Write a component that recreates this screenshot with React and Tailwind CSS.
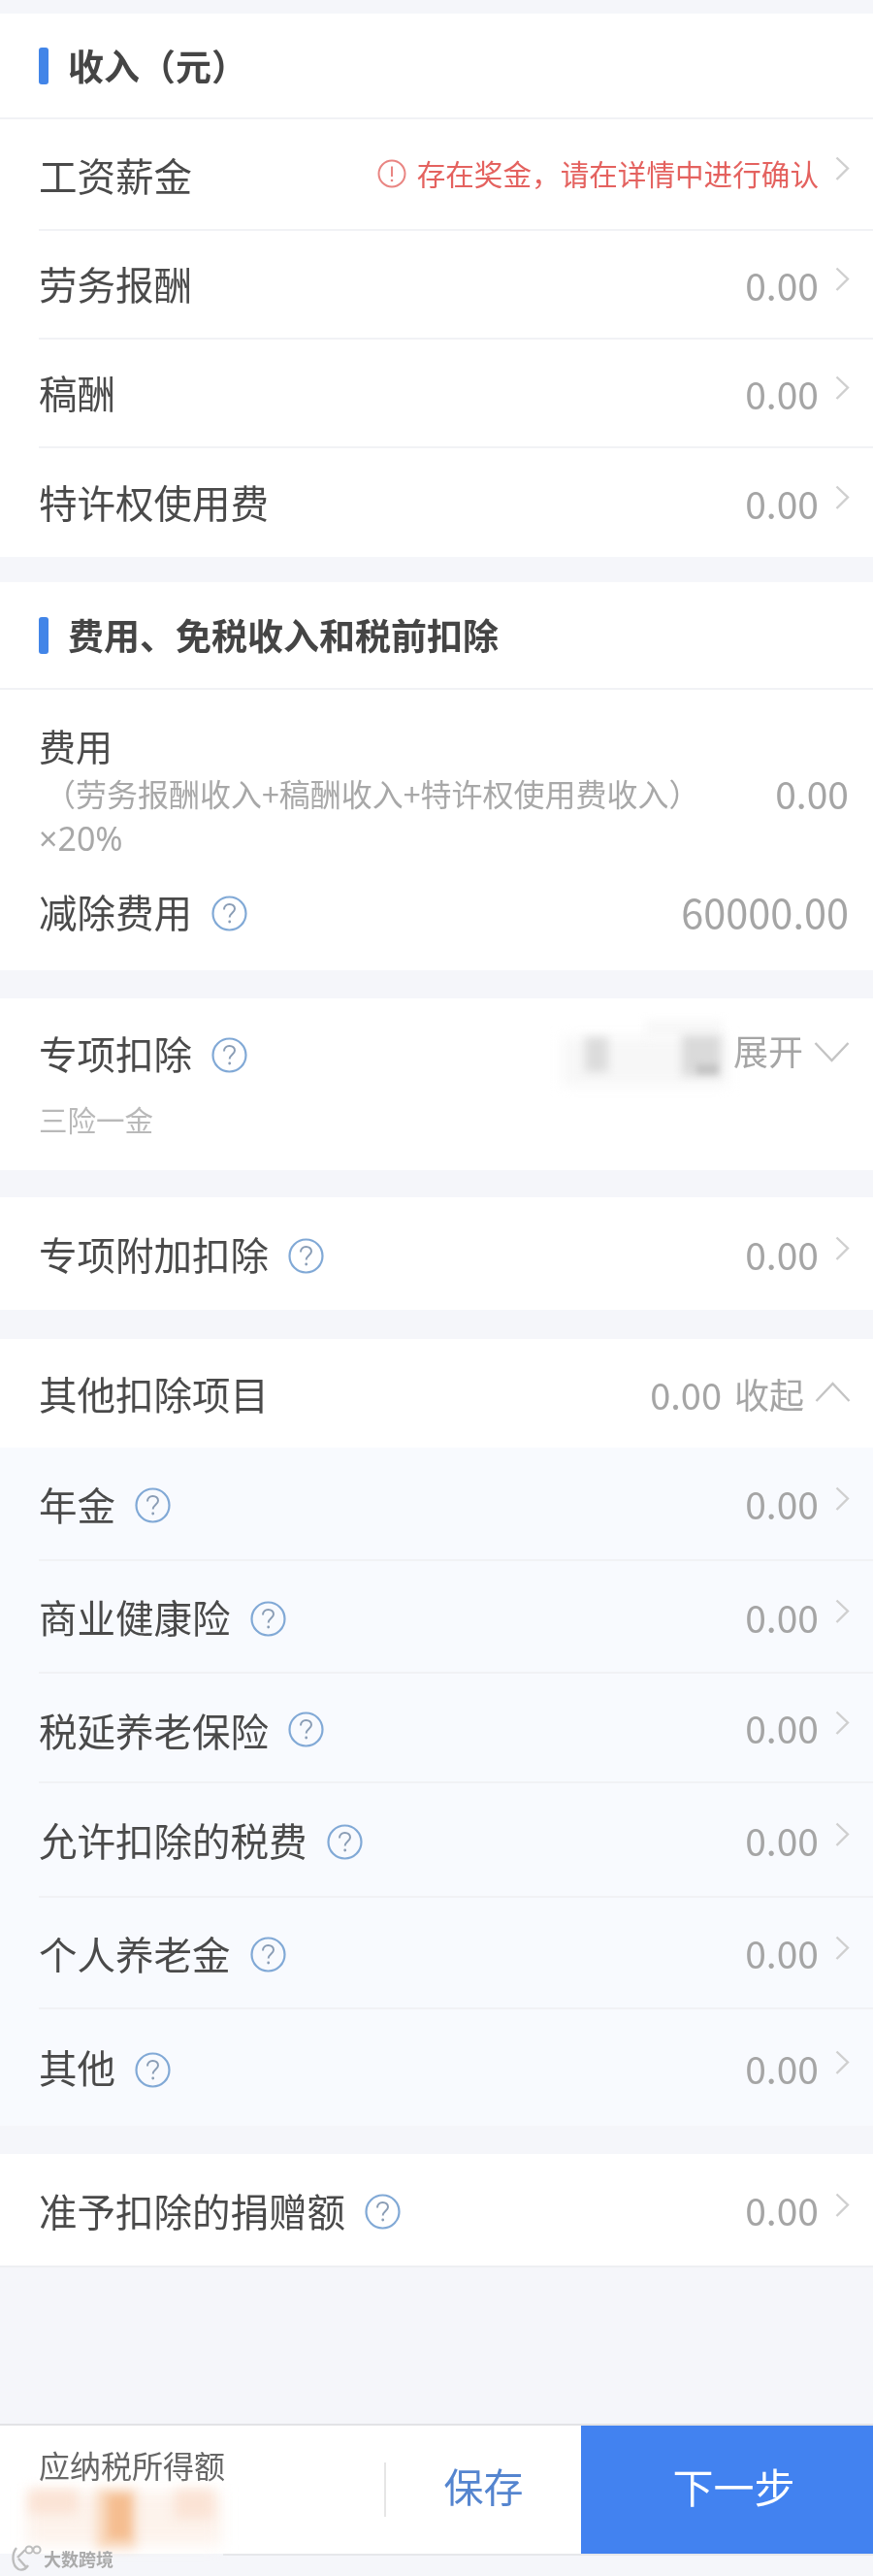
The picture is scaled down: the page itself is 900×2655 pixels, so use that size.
import React from 'react';

const Chevron = () => (
  <svg width="15" height="26" viewBox="0 0 15 26" fill="none" className="mb-[10px] ml-[17px] shrink-0">
    <path d="M1.5 1.5 L13 12.5 L1.5 24" stroke="#cfcfcf" strokeWidth="2.4" />
  </svg>
);

const Help = () => (
  <svg width="37" height="37" viewBox="0 0 37 37" fill="none" className="ml-[20px] mt-[4px] shrink-0">
    <circle cx="18.5" cy="18.5" r="17" stroke="#81a9d6" strokeWidth="2.2" />
    <path d="M13 14.5 C13 11 15.5 9 18.5 9 C21.8 9 24 11 24 13.8 C24 17.5 18.7 18 18.7 22.5" stroke="#8a9db5" strokeWidth="2" />
    <circle cx="18.7" cy="27" r="1.4" fill="#8a9db5" />
  </svg>
);

const Alert = () => (
  <svg width="30" height="30" viewBox="0 0 30 30" fill="none" className="mr-[11px] shrink-0">
    <circle cx="15" cy="15" r="13.5" stroke="#e98582" strokeWidth="2" />
    <path d="M15 7.5 V18" stroke="#e98582" strokeWidth="2" />
    <circle cx="15" cy="22" r="1.3" fill="#e98582" />
  </svg>
);

const Title = ({ text }) => (
  <div className="flex items-center pl-[40px] h-full">
    <div className="w-[10px] h-[38px] rounded-[3px] bg-[#4285e8]"></div>
    <div className="ml-[20px] text-[37px] font-bold text-[#454545]">{text}</div>
  </div>
);

const Row = ({ label, help, value = '0.00', height, last, warn, textClass = '' }) => (
  <div className="pl-[40px]" style={{ height }}>
    <div className={`flex items-center h-full pr-[24px] ${last ? '' : 'border-b-2 border-[#f1f2f5]'}`}>
      <span className={`text-[39.5px] text-[#4a4a4a] whitespace-nowrap ${textClass}`}>{label}</span>
      {help && <Help />}
      <div className="ml-auto flex items-center">
        {warn ? (
          <>
            <Alert />
            <span className="text-[29.6px] text-[#e4625f] whitespace-nowrap">{warn}</span>
          </>
        ) : (
          <span className="text-[39px] text-[#a5a5a5]">{value}</span>
        )}
        <Chevron />
      </div>
    </div>
  </div>
);

const otherRows = [
  ['年金', 117, ''],
  ['商业健康险', 116, ''],
  ['税延养老保险', 113, 'mt-[5px]'],
  ['允许扣除的税费', 118, ''],
  ['个人养老金', 115, ''],
  ['其他', 120, 'mb-[2px]'],
];

export default function App() {
  return (
    <div className="relative w-[900px] h-[2655px] overflow-hidden bg-[#f5f6fa] blur-[0.6px] font-['Noto_Sans_CJK_SC','Noto_Sans',sans-serif]">
      <div className="h-[14px]"></div>

      {/* 收入 */}
      <div className="bg-white">
        <div className="h-[109px] border-b-2 border-[#f1f2f5]">
          <Title text="收入（元）" />
        </div>
        <Row label="工资薪金" height={115} warn="存在奖金，请在详情中进行确认" />
        <Row label="劳务报酬" height={112} textClass="mb-[3px]" />
        <Row label="稿酬" height={112} textClass="mb-[3px]" />
        <Row label="特许权使用费" height={112} last textClass="mb-[3px]" />
      </div>

      <div className="h-[26px]"></div>

      {/* 费用 */}
      <div className="bg-white">
        <div className="h-[111px] border-b-2 border-[#f1f2f5]">
          <Title text="费用、免税收入和税前扣除" />
        </div>
        <div className="h-[289px] pl-[40px] pr-[25px] pt-[28px]">
          <div className="text-[38px] leading-[58px] text-[#4a4a4a]">费用</div>
          <div className="flex items-center h-[40px]">
            <span className="ml-[6px] text-[32px] text-[#a8a8a8] whitespace-nowrap">（劳务报酬收入+稿酬收入+特许权使用费收入）</span>
            <span className="ml-auto text-[39px] text-[#a5a5a5]">0.00</span>
          </div>
          <div className="text-[34px] leading-[54px] text-[#a8a8a8] font-['Noto_Sans',sans-serif]">×20%</div>
          <div className="flex items-center h-[70px] mt-[13px]">
            <span className="text-[39.5px] text-[#4a4a4a]">减除费用</span>
            <Help />
            <span className="ml-auto text-[41.5px] text-[#a5a5a5]">60000.00</span>
          </div>
        </div>
      </div>

      <div className="h-[29px]"></div>

      {/* 专项扣除 */}
      <div className="relative h-[177px] bg-white pl-[40px] pr-[24px] pt-[36px]">
        <div className="flex items-center h-[40px]">
          <span className="text-[39.5px] text-[#4a4a4a]">专项扣除</span>
          <Help />
          <span className="ml-auto mb-[6px] text-[36px] text-[#a5a5a5]">展开</span>
          <svg width="37" height="22" viewBox="0 0 37 22" fill="none" className="ml-[11px] mb-[3px]">
            <path d="M1.5 2 L18.5 20 L35.5 2" stroke="#c4c4c4" strokeWidth="2.4" />
          </svg>
        </div>
        <div className="mt-[26px] text-[29.5px] text-[#b9b9b9]">三险一金</div>
        <div className="absolute left-[580px] top-[40px] w-[170px] h-[50px] bg-[#f7f7f7] blur-[7px]"></div>
        <div className="absolute left-[665px] top-[22px] w-[80px] h-[20px] bg-[#f8f8f8] blur-[5px]"></div>
        <div className="absolute left-[603px] top-[40px] w-[24px] h-[36px] bg-[#dcdcdc] blur-[5px]"></div>
        <div className="absolute left-[703px] top-[38px] w-[40px] h-[42px] bg-[#dadada] blur-[5px]"></div>
        <div className="absolute left-[718px] top-[68px] w-[22px] h-[10px] bg-[#c4c4c4] blur-[3px]"></div>
      </div>

      <div className="h-[28px]"></div>

      <div className="bg-white">
        <Row label="专项附加扣除" help height={116} last />
      </div>

      <div className="h-[30px]"></div>

      {/* 其他扣除项目 */}
      <div className="h-[112px] bg-white flex items-center pl-[40px] pr-[23px]">
        <span className="text-[39.5px] text-[#4a4a4a]">其他扣除项目</span>
        <span className="ml-auto text-[38px] text-[#a5a5a5]">0.00</span>
        <span className="ml-[13px] text-[36px] text-[#a5a5a5]">收起</span>
        <svg width="37" height="22" viewBox="0 0 37 22" fill="none" className="ml-[11px] mb-[2px]">
          <path d="M1.5 20 L18.5 2 L35.5 20" stroke="#c4c4c4" strokeWidth="2.4" />
        </svg>
      </div>
      <div className="bg-[#f8fafe]">
        {otherRows.map(([label, height, textClass], i) => (
          <Row key={label} label={label} help height={height} textClass={textClass} last={i === otherRows.length - 1} />
        ))}
      </div>

      <div className="h-[29px]"></div>

      <div className="bg-white border-b-2 border-[#eeeff2]">
        <Row label="准予扣除的捐赠额" help height={115} last />
      </div>

      <div className="h-[161px]"></div>

      {/* 底部 */}
      <div className="relative h-[134px] flex bg-white border-t-2 border-[#e2e3e6]">
        <div className="w-[396px] pl-[40px] pt-[17px]">
          <div className="text-[32px] leading-[46px] text-[#666666]">应纳税所得额</div>
        </div>
        <div className="w-[2px] h-[56px] mt-[38px] bg-[#e6e6e6]"></div>
        <div className="w-[201px] pb-[9px] flex items-center justify-center text-[41px] text-[#5585cf]">保存</div>
        <div className="w-[301px] pb-[9px] pl-[14px] flex items-center justify-center text-[42px] text-white bg-[#4282f0]">下一步</div>
        <div className="absolute left-[28px] top-[68px] w-[200px] h-[55px] bg-[#fdf3ec] blur-[8px]"></div>
        <div className="absolute left-[30px] top-[66px] w-[50px] h-[25px] bg-[#fbe3d5] blur-[6px]"></div>
        <div className="absolute left-[180px] top-[66px] w-[40px] h-[30px] bg-[#fbe3d5] blur-[6px]"></div>
        <div className="absolute left-[100px] top-[66px] w-[40px] h-[60px] bg-[#f8d5b8] blur-[6px]"></div>
        <div className="absolute left-[112px] top-[72px] w-[22px] h-[44px] bg-[#f5bd90] blur-[4px]"></div>
      </div>
      <div className="ml-[230px] h-[21px] border-t-2 border-[#e6e7ea]"></div>

      {/* 水印 */}
      <div className="absolute left-[9px] top-[2622px] flex items-center">
        <svg width="34" height="30" viewBox="0 0 34 30" fill="none">
          <path d="M8 4 C3 10 3 22 10 26 C15 28 18 25 20 22 M9 14 L17 6 M10 15 L18 24" stroke="#bdbdbd" strokeWidth="2.4" />
          <circle cx="21" cy="6" r="3.6" stroke="#bdbdbd" strokeWidth="2" />
          <circle cx="29" cy="6" r="3.6" stroke="#bdbdbd" strokeWidth="2" />
        </svg>
        <span className="ml-[2px] text-[18px] font-bold text-[#aaaaaa]">大数跨境</span>
      </div>
    </div>
  );
}
